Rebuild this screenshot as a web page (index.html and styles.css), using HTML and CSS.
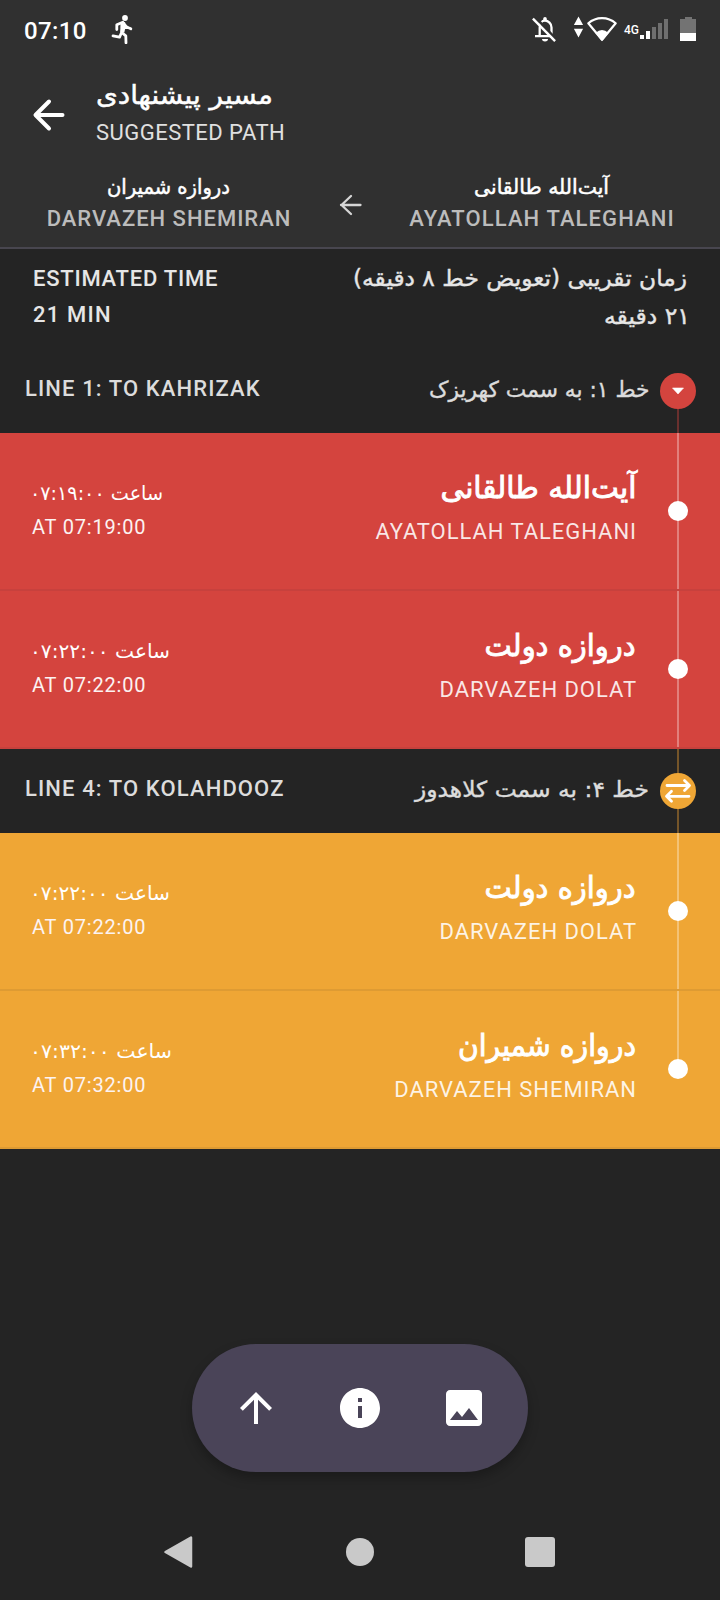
FILE: index.html
```
<!DOCTYPE html>
<html lang="en">
<head>
<meta charset="utf-8">
<title>Suggested path</title>
<link rel="stylesheet" href="styles.css">
</head>
<body>
<div class="screen">
  <header class="header">
    <div class="status">
      <span class="clock">07:10</span>
      <svg class="run" width="28" height="31" viewBox="108 13 28 31"><circle cx="125" cy="18" r="2.900" fill="#fff"/><path d="M116.800 29.500v-4.800l6-2.500 1.200 5.500 3.700-.2M124.500 24.500l2 2.300 4.300 2M123.300 25l-1.600 7.200-2.200 5-6.500-1.300M121.800 32.500l4 3.300.2 7" fill="none" stroke="#fff" stroke-width="2.800" stroke-linecap="round" stroke-linejoin="round"/><path d="M120.500 22.500l4.500-.5.800 4-1.500 6.500-4-.5z" fill="#fff"/></svg>
      <svg class="bell" width="28" height="28" viewBox="530 15 28 28"><path d="M539.7 36V27.500c0-4 2-6.800 5.300-6.800s6.500 2.800 6.500 6.800V36M535 36.100h17.500" fill="none" stroke="#fff" stroke-width="2.300"/><path d="M543.200 21v-2.200a1.800 1.800 0 0 1 3.600 0V21zM542 39h6a3 2.400 0 0 1-6 0z" fill="#fff"/><path d="M535.500 17.500l22 23" stroke="#303030" stroke-width="2.600"/><path d="M532.900 18.700l22.200 22.500" stroke="#fff" stroke-width="2.400"/></svg>
      <svg class="wifi" width="44" height="28" viewBox="574 15 44 28"><path d="M578.500 16.500l4.600 8.500h-9.200zM578.500 37.500l4.600-8.700h-9.200z" fill="#fff"/><path d="M588.300 23.300a20.500 20.500 0 0 1 27.400 0L602 39.700z" fill="none" stroke="#fff" stroke-width="2.200" stroke-linejoin="round"/><path d="M602 41.300l-6.500-8.200q6.500-6 13 0z" fill="#fff"/></svg>
      <span class="net">4G</span>
      <svg class="signal" width="28" height="20" viewBox="0 0 28 20"><path d="M0 16h4v4H0zM6 12h4v8H6z" fill="#fff"/><path d="M12 8h4v12h-4zM18 4h4v16h-4zM24 0h4v20h-4z" fill="#6f6f6f"/></svg>
      <svg class="battery" width="16" height="24" viewBox="0 0 16 24"><path d="M5 0h7v2h4v15H0V2h5z" fill="#737373"/><path d="M0 16h16v8H0z" fill="#fff"/></svg>
    </div>
    <div class="appbar">
      <svg class="back" width="34" height="34" viewBox="0 0 34 34"><path d="M30.500 17H4M17 3.500L3.500 17 17 30.500" fill="none" stroke="#fff" stroke-width="4" stroke-linecap="round" stroke-linejoin="round"/></svg>
      <div class="titles">
        <svg class="fa fa-medium" width="177" height="40"><text x="177" y="30" font-size="26" textLength="177" lengthAdjust="spacingAndGlyphs">مسیر پیشنهادی</text></svg>
        <div class="subtitle">SUGGESTED PATH</div>
      </div>
    </div>
    <div class="route">
      <div class="end">
        <svg class="fa fa-medium" width="122" height="30"><text x="122" y="24" font-size="20.500" textLength="123" lengthAdjust="spacingAndGlyphs">دروازه شمیران</text></svg>
        <div class="end-en narrow">DARVAZEH SHEMIRAN</div>
      </div>
      <svg class="to" width="26" height="26" viewBox="0 0 26 26"><path d="M23.500 13H4M14 4l-9.500 9L14 22" fill="none" stroke="#d6d6d6" stroke-width="2.300" stroke-linecap="round" stroke-linejoin="round"/></svg>
      <div class="end">
        <svg class="fa fa-medium" width="135" height="30"><text x="135" y="24" font-size="20.500" textLength="135" lengthAdjust="spacingAndGlyphs">آیت‌الله طالقانی</text></svg>
        <div class="end-en">AYATOLLAH TALEGHANI</div>
      </div>
    </div>
  </header>

  <section class="summary">
    <div class="sum-en"><div class="est">ESTIMATED TIME</div><div>21 MIN</div></div>
    <div class="sum-fa">
      <svg class="fa fa-label" width="334" height="36"><text x="334" y="25" font-size="22.500" textLength="334" lengthAdjust="spacingAndGlyphs">زمان تقریبی (تعویض خط ۸ دقیقه)</text></svg>
      <svg class="fa fa-label" width="88" height="37"><text x="91" y="27" font-size="22.500" textLength="86" lengthAdjust="spacingAndGlyphs">۲۱ دقیقه</text></svg>
    </div>
  </section>

  <section class="line red">
    <div class="line-head first">
      <div class="line-en">LINE 1: TO KAHRIZAK</div>
      <svg class="fa fa-label dim" width="221" height="30"><text x="220.500" y="21" font-size="22" textLength="220.500" lengthAdjust="spacingAndGlyphs">خط ۱: به سمت کهریزک</text></svg>
      <div class="badge"><svg width="36" height="36" viewBox="0 0 36 36"><path d="M12.500 15h11L18 21z" fill="#fff" stroke="#fff" stroke-width=".6" stroke-linejoin="round"/></svg></div>
    </div>
    <div class="stop">
      <div class="time">
        <svg class="fa" width="134" height="30"><text x="134" y="22" font-size="20" textLength="133" lengthAdjust="spacingAndGlyphs">ساعت ۰۷:۱۹:۰۰</text></svg>
        <div class="time-en">AT 07:19:00</div>
      </div>
      <div class="name">
        <svg class="fa fa-name" width="197" height="44"><text x="197.500" y="34.500" font-size="30" textLength="196" lengthAdjust="spacingAndGlyphs">آیت‌الله طالقانی</text></svg>
        <div class="name-en">AYATOLLAH TALEGHANI</div>
      </div>
      <div class="track"><i class="dot"></i></div>
    </div>
    <div class="stop">
      <div class="time">
        <svg class="fa" width="141" height="30"><text x="141" y="22" font-size="20" textLength="140" lengthAdjust="spacingAndGlyphs">ساعت ۰۷:۲۲:۰۰</text></svg>
        <div class="time-en">AT 07:22:00</div>
      </div>
      <div class="name">
        <svg class="fa fa-name" width="151" height="44"><text x="150.500" y="34.500" font-size="30" textLength="151" lengthAdjust="spacingAndGlyphs">دروازه دولت</text></svg>
        <div class="name-en">DARVAZEH DOLAT</div>
      </div>
      <div class="track"><i class="dot"></i></div>
    </div>
  </section>

  <section class="line orange">
    <div class="line-head">
      <div class="line-en">LINE 4: TO KOLAHDOOZ</div>
      <svg class="fa fa-label dim" width="234" height="30"><text x="233" y="21" font-size="22" textLength="234" lengthAdjust="spacingAndGlyphs">خط ۴: به سمت کلاهدوز</text></svg>
      <div class="badge"><svg width="36" height="36" viewBox="0 0 36 36"><path d="M7 12.500h22M24.500 7.500l5 5-5 5M29 23.300H7M11.500 18.300l-5 5 5 5" fill="none" stroke="#fff" stroke-width="2.800" stroke-linecap="round" stroke-linejoin="round"/></svg></div>
    </div>
    <div class="stop">
      <div class="time">
        <svg class="fa" width="141" height="30"><text x="141" y="22" font-size="20" textLength="140" lengthAdjust="spacingAndGlyphs">ساعت ۰۷:۲۲:۰۰</text></svg>
        <div class="time-en">AT 07:22:00</div>
      </div>
      <div class="name">
        <svg class="fa fa-name" width="151" height="44"><text x="150.500" y="34.500" font-size="30" textLength="151" lengthAdjust="spacingAndGlyphs">دروازه دولت</text></svg>
        <div class="name-en">DARVAZEH DOLAT</div>
      </div>
      <div class="track"><i class="dot"></i></div>
    </div>
    <div class="stop">
      <div class="time">
        <svg class="fa" width="143" height="30"><text x="143" y="22" font-size="20" textLength="142" lengthAdjust="spacingAndGlyphs">ساعت ۰۷:۳۲:۰۰</text></svg>
        <div class="time-en">AT 07:32:00</div>
      </div>
      <div class="name">
        <svg class="fa fa-name" width="178" height="44"><text x="178" y="34.500" font-size="30" textLength="178" lengthAdjust="spacingAndGlyphs">دروازه شمیران</text></svg>
        <div class="name-en">DARVAZEH SHEMIRAN</div>
      </div>
      <div class="track last"><i class="dot"></i></div>
    </div>
  </section>

  <div class="actions">
    <svg width="48" height="48" viewBox="0 0 24 24"><path d="M4 12l1.410 1.410L11 7.830V20h2V7.830l5.580 5.590L20 12l-8-8-8 8z"/></svg>
    <svg width="48" height="48" viewBox="0 0 24 24"><path d="M12 2C6.480 2 2 6.480 2 12s4.480 10 10 10 10-4.480 10-10S17.520 2 12 2zm1 15h-2v-6h2v6zm0-8h-2V7h2v2z"/></svg>
    <svg width="48" height="48" viewBox="0 0 24 24"><path d="M21 19V5c0-1.100-.9-2-2-2H5c-1.100 0-2 .9-2 2v14c0 1.100.9 2 2 2h14c1.100 0 2-.9 2-2zM8.500 13.500l2.500 3.010L14.500 12l4.500 6H5l3.500-4.500z"/></svg>
  </div>

  <nav class="nav">
    <svg width="32" height="34" viewBox="0 0 32 34"><path d="M3.500 17L29 2.500v29z" stroke="#c9c9c9" stroke-width="2.500" stroke-linejoin="round"/></svg>
    <svg width="32" height="34" viewBox="0 0 32 34"><circle cx="17" cy="17" r="14"/></svg>
    <svg width="32" height="34" viewBox="0 0 32 34"><rect x="1" y="2" width="30" height="30" rx="3"/></svg>
  </nav>
</div>
</body>
</html>
```
FILE: styles.css
```
* { box-sizing: border-box; }
body { margin: 0; background: #242424; color: #fff; font-family: Roboto, "DejaVu Sans", sans-serif; }
svg { display: block; flex: none; }

.screen { width: 720px; height: 1600px; display: flex; flex-direction: column; overflow: hidden; }

/* Persian labels */
.fa { overflow: visible; fill: #fff; font-family: "DejaVu Sans", sans-serif; }
.fa text { direction: rtl; }
.fa-medium { stroke: #fff; stroke-width: .5px; }
.fa-label { fill: #e6e6e6; stroke: #e6e6e6; stroke-width: .4px; }
.fa-label.dim { fill: #dcdcdc; stroke: #dcdcdc; }
.fa-name { stroke: #fff; stroke-width: .9px; }

.header { height: 249px; background: #303030; border-bottom: 2px solid #48464f; }

.status { height: 60px; padding: 0 24px; display: flex; align-items: flex-start; }
.clock { font-size: 24px; font-weight: 500; line-height: 32px; letter-spacing: .4px; margin-top: 15px; width: 84px; }
.run { margin-top: 13px; }
.bell { margin: 15px 16px 0 auto; }
.wifi { margin: 15px 6px 0 0; }
.net { font-size: 12px; font-weight: 500; line-height: 14px; width: 16px; margin-top: 23px; }
.signal { margin: 19px 12px 0 0; }
.battery { margin-top: 17px; }

.appbar { height: 110px; padding: 14px 0 0 32px; display: flex; }
.back { margin-top: 24px; }
.titles { margin-left: 30px; }
.subtitle { font-size: 22px; line-height: 30px; letter-spacing: .47px; color: #e0e0e0; margin-top: 4px; }

.route { display: grid; grid-template-columns: 337px 26px 357px; }
.end { display: flex; flex-direction: column; align-items: center; }
.end-en { font-size: 22px; font-weight: 500; line-height: 30px; letter-spacing: 1.1px; color: #bcbcbc; margin: 4px 0 0 1px; }
.end-en.narrow { letter-spacing: .98px; }
.to { margin-top: 22px; }

.summary { height: 100px; padding: 12px 33px 0; display: flex; justify-content: space-between; }
.sum-en { font-size: 22px; font-weight: 500; line-height: 36px; letter-spacing: 1.2px; color: #e6e6e6; }
.est { letter-spacing: .76px; }
.sum-fa { display: flex; flex-direction: column; align-items: flex-end; }

.red { --line: #d4443e; --rule: #c7413d; --rail: #6a302e; }
.orange { --line: #efa635; --rule: #de9b33; --rail: #755529; }

.line-head { height: 84px; padding: 0 24px 0 25px; display: flex; align-items: center;
  background: linear-gradient(var(--rail), var(--rail)) 677px 0 / 2px 84px no-repeat; }
.line-head.first { background-position: 677px 42px; }
.line-en { font-size: 22px; font-weight: 500; line-height: 30px; letter-spacing: 1.11px; color: #dcdcdc; margin: -5px auto 0 0; }
.badge { width: 36px; height: 36px; border-radius: 50%; background: var(--line); margin-left: 10px; }

.stop { height: 158px; background: var(--line); border-bottom: 2px solid var(--rule); display: flex; }
.time { padding: 45px 0 0 29px; margin-right: auto; }
.time-en { font-size: 20px; line-height: 30px; letter-spacing: .8px; margin: 4px 0 0 3px; color: #fcf3f2; }
.name { padding-top: 30px; display: flex; flex-direction: column; align-items: flex-end; }
.name-en { font-size: 22px; line-height: 30px; letter-spacing: .96px; margin: 10px -1px 0 0; color: rgba(255, 255, 255, .88); }
.track { width: 84px; display: flex; align-items: center; justify-content: center;
  background: linear-gradient(rgba(255, 255, 255, .32), rgba(255, 255, 255, .32)) 41px 0 / 2px 100% no-repeat; }
.track.last { background-size: 2px 78px; }
.dot { width: 20px; height: 20px; border-radius: 50%; background: #fff; }

.actions { width: 336px; height: 128px; margin: 195px auto 0; padding: 0 40px; border-radius: 64px; background: #4a4458;
  display: flex; align-items: center; justify-content: space-between; fill: #fff; box-shadow: 0 6px 12px rgba(0, 0, 0, .26); }

.nav { margin-top: 63px; padding: 0 164px 0 162px; display: flex; justify-content: space-between; fill: #c9c9c9; }
```
